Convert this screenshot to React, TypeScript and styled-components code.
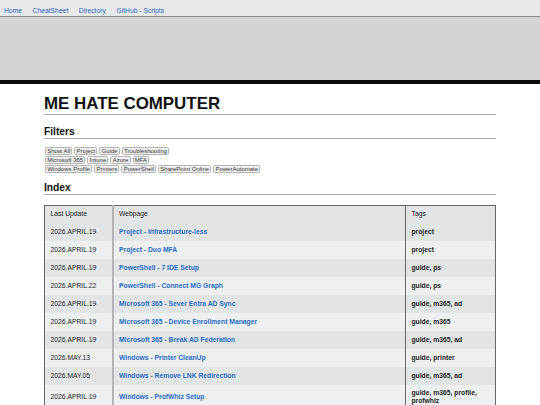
import React from "react";
import styled, { createGlobalStyle } from "styled-components";

const GlobalStyle = createGlobalStyle`
  html, body { margin: 0; padding: 0; background: #ffffff; }
  body { font-family: "Liberation Sans", Arial, sans-serif; font-size: 6.75px; color: #222; }
  * { box-sizing: border-box; }
`;

const Header = styled.header`
  background: #d4d4d4;
  border-bottom: 4px solid #0a0a0a;
  height: 84px;
`;

const Nav = styled.nav`
  display: flex;
  align-items: center;
  gap: 10.6px;
  height: 17px;
  padding: 4px 0 0 4px;
  background: #e8e9eb;
  border-bottom: 1px solid #8a8a8a;
`;

const NavLink = styled.a`
  color: #2b68bd;
  font-size: 6.75px;
  text-decoration: none;
`;

const Main = styled.main`
  width: 452px;
  margin: 0 auto;
`;

const Title = styled.h1`
  margin: 10px 0 0;
  font-size: 16.9px;
  line-height: 20px;
  font-weight: bold;
  color: #111;
  border-bottom: 1px solid #a8a8a8;
`;

const SectionTitle = styled.h2<{ $top: number }>`
  margin: ${(p) => p.$top}px 0 0;
  font-size: 10.2px;
  line-height: 12px;
  font-weight: bold;
  color: #111;
  border-bottom: 1px solid #a8a8a8;
`;

const FilterGroup = styled.div`
  display: flex;
  flex-direction: column;
  gap: 1px;
  margin-top: 8px;
`;

const FilterRow = styled.div`
  display: flex;
  gap: 2px;
  padding-left: 1px;
`;

const FilterButton = styled.button`
  height: 8px;
  margin: 0;
  padding: 0 1.2px;
  font-family: "Liberation Sans", Arial, sans-serif;
  font-size: 6px;
  line-height: 6px;
  color: #333;
  background: #efefef;
  border: 1px solid #b4b4b4;
  border-radius: 1.5px;
`;

const Table = styled.table`
  margin-top: 10px;
  width: 100%;
  border-collapse: collapse;
  border: 1px solid #666;
  table-layout: fixed;
`;

const Row = styled.tr<{ $shade: boolean }>`
  background: ${(p) => (p.$shade ? "#e3e4e6" : "#eeeff1")};
`;

const Cell = styled.td<{ $col: number; $head?: boolean }>`
  height: ${(p) => (p.$head ? 17 : 18)}px;
  padding: 4px 5.5px;
  font-size: 6.75px;
  line-height: 8px;
  text-align: left;
  vertical-align: middle;
  color: #222;
  font-weight: ${(p) => (p.$col === 2 && !p.$head ? "bold" : "normal")};
  border-left: ${(p) =>
    p.$col === 1 ? "2px solid #b4b4b4" : p.$col === 2 ? "1px solid #666" : "none"};
`;

const PageLink = styled.a`
  color: #1f6bc4;
  font-weight: bold;
  text-decoration: none;
`;

const navLinks = ["Home", "CheatSheet", "Directory", "GitHub - Scripts"];

const filters = [
  ["Show All", "Project", "Guide", "Troubleshooting"],
  ["Microsoft 365", "Intune", "Azure", "MFA"],
  ["Windows Profile", "Printers", "PowerShell", "SharePoint Online", "PowerAutomate"],
];

const rows: [string, string, string][] = [
  ["2026.APRIL.19", "Project - Infrastructure-less", "project"],
  ["2026.APRIL.19", "Project - Duo MFA", "project"],
  ["2026.APRIL.19", "PowerShell - 7 IDE Setup", "guide, ps"],
  ["2026.APRIL.22", "PowerShell - Connect MG Graph", "guide, ps"],
  ["2026.APRIL.19", "Microsoft 365 - Sever Entra AD Sync", "guide, m365, ad"],
  ["2026.APRIL.19", "Microsoft 365 - Device Enrollment Manager", "guide, m365"],
  ["2026.APRIL.19", "Microsoft 365 - Break AD Federation", "guide, m365, ad"],
  ["2026.MAY.13", "Windows - Printer CleanUp", "guide, printer"],
  ["2026.MAY.05", "Windows - Remove LNK Redirection", "guide, m365, ad"],
  ["2026.APRIL.19", "Windows - ProfWhiz Setup", "guide, m365, profile, profwhiz"],
];

export default function App() {
  return (
    <>
      <GlobalStyle />
      <Header>
        <Nav>
          {navLinks.map((l) => (
            <NavLink key={l} href="#">
              {l}
            </NavLink>
          ))}
        </Nav>
      </Header>
      <Main>
        <Title>ME HATE COMPUTER</Title>
        <SectionTitle $top={11}>Filters</SectionTitle>
        <FilterGroup>
          {filters.map((row, i) => (
            <FilterRow key={i}>
              {row.map((f) => (
                <FilterButton key={f}>{f}</FilterButton>
              ))}
            </FilterRow>
          ))}
        </FilterGroup>
        <SectionTitle $top={9}>Index</SectionTitle>
        <Table>
          <colgroup>
            <col style={{ width: 68 }} />
            <col />
            <col style={{ width: 90 }} />
          </colgroup>
          <thead>
            <Row $shade>
              <Cell as="th" $col={0} $head>
                Last Update
              </Cell>
              <Cell as="th" $col={1} $head>
                Webpage
              </Cell>
              <Cell as="th" $col={2} $head>
                Tags
              </Cell>
            </Row>
          </thead>
          <tbody>
            {rows.map(([d, p, t], i) => (
              <Row key={p} $shade={i % 2 === 0}>
                <Cell $col={0}>{d}</Cell>
                <Cell $col={1}>
                  <PageLink href="#">{p}</PageLink>
                </Cell>
                <Cell $col={2}>{t}</Cell>
              </Row>
            ))}
          </tbody>
        </Table>
      </Main>
    </>
  );
}
